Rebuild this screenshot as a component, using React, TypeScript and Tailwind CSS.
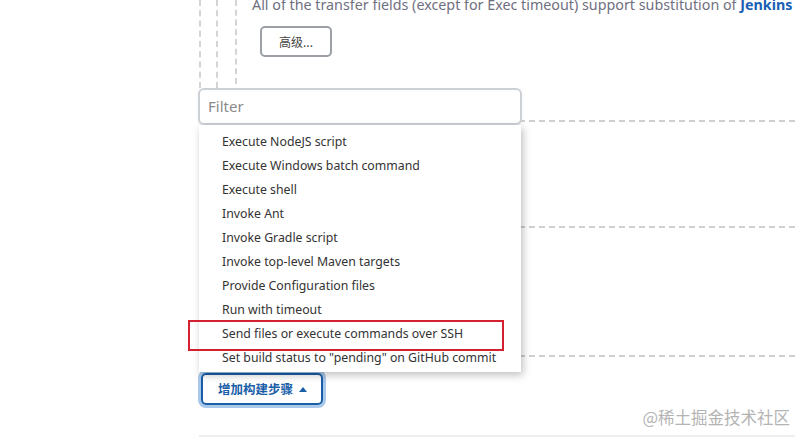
import React from "react";

const items = [
  "Execute NodeJS script",
  "Execute Windows batch command",
  "Execute shell",
  "Invoke Ant",
  "Invoke Gradle script",
  "Invoke top-level Maven targets",
  "Provide Configuration files",
  "Run with timeout",
  "Send files or execute commands over SSH",
  'Set build status to "pending" on GitHub commit',
];

const hdash =
  "h-[2px] bg-[repeating-linear-gradient(to_right,#cfcfcf_0_6px,transparent_6px_10px)]";

export default function App() {
  return (
    <div
      className="relative w-[795px] h-[439px] bg-white overflow-hidden"
      style={{ fontFamily: '"Noto Sans", "Noto Sans CJK SC", sans-serif' }}
    >
      {/* nested sections */}
      <div className="flex flex-col pl-[199px]">
        <div className="h-[88px] border-l-2 border-dashed border-[#d4d4d4] pl-[15px]">
          <div className="h-full border-l-2 border-dashed border-[#d4d4d4] pl-[17px]">
            <div className="flex h-[84px] flex-col border-l-2 border-dashed border-[#d4d4d4] pl-[15px]">
              <div className="-mt-[6px] whitespace-nowrap text-[14.3px] leading-[22px] text-[#6f6f7f]">
                All of the transfer fields (except for Exec timeout) support substitution of{" "}
                <span className="font-bold text-[#1a5fb4]">Jenkins environment variables</span>
              </div>
              <div className="mt-[10px] flex">
                <div
                  className="ml-[8px] flex h-[31px] w-[72px] items-center justify-center rounded-[5px] border-2 border-[#9aa0a6] text-[12px] text-[#444]"
                  style={{ fontFamily: '"Noto Sans CJK SC", sans-serif' }}
                >
                  高级...
                </div>
              </div>
            </div>
          </div>
        </div>

        <div className="h-[32px]" />
        <div className={hdash} />
        <div className="h-[104px]" />
        <div className={hdash} />
        <div className="h-[127px]" />
        <div className={hdash} />
        <div className="h-[16px]" />

        <div className="pl-[2px]">
          <div className="inline-flex h-[32px] items-center gap-[6px] rounded-[5px] border-2 border-[#1a5ea8] pl-[15px] pr-[14px] text-[12.5px] font-semibold text-[#1a5ea8] shadow-[0_0_0_3px_#a9c8ea]">
            <span style={{ fontFamily: '"Noto Sans CJK SC", sans-serif' }}>增加构建步骤</span>
            <svg width="8" height="5" viewBox="0 0 8 5">
              <path d="M0 5 L4 0 L8 5 Z" fill="#1a5ea8" />
            </svg>
          </div>
        </div>
        <div className="h-[30px]" />
        <div className="h-[2px] bg-[#eeeeee]" />
      </div>

      {/* watermark */}
      <div
        className="absolute right-[5px] top-[405px] text-[16.5px] text-[#b4b4b4]"
        style={{ fontFamily: '"Noto Sans CJK SC", sans-serif' }}
      >
        @稀土掘金技术社区
      </div>

      {/* dropdown overlay */}
      <div className="absolute left-[198px] top-[88px] w-[324px]">
        <div className="flex h-[37px] items-center rounded-[6px] border-2 border-[#cdd1d6] bg-white px-[8px] text-[15px] text-[#8a8a8a] shadow-[0_1px_2px_rgba(0,0,0,0.08)]">
          Filter
        </div>
        <div className="ml-[1px] w-[322px] bg-white pt-[5px] pb-[2px] shadow-[2px_3px_8px_rgba(0,0,0,0.25)]">
          {items.map((t) => (
            <div
              key={t}
              className="h-[24px] whitespace-nowrap pl-[23px] text-[12.3px] leading-[24px] text-[#333]"
            >
              {t}
            </div>
          ))}
        </div>
      </div>

      {/* red highlight */}
      <div className="absolute left-[188px] top-[320px] h-[31px] w-[316px] border-2 border-[#d42030]" />
    </div>
  );
}
